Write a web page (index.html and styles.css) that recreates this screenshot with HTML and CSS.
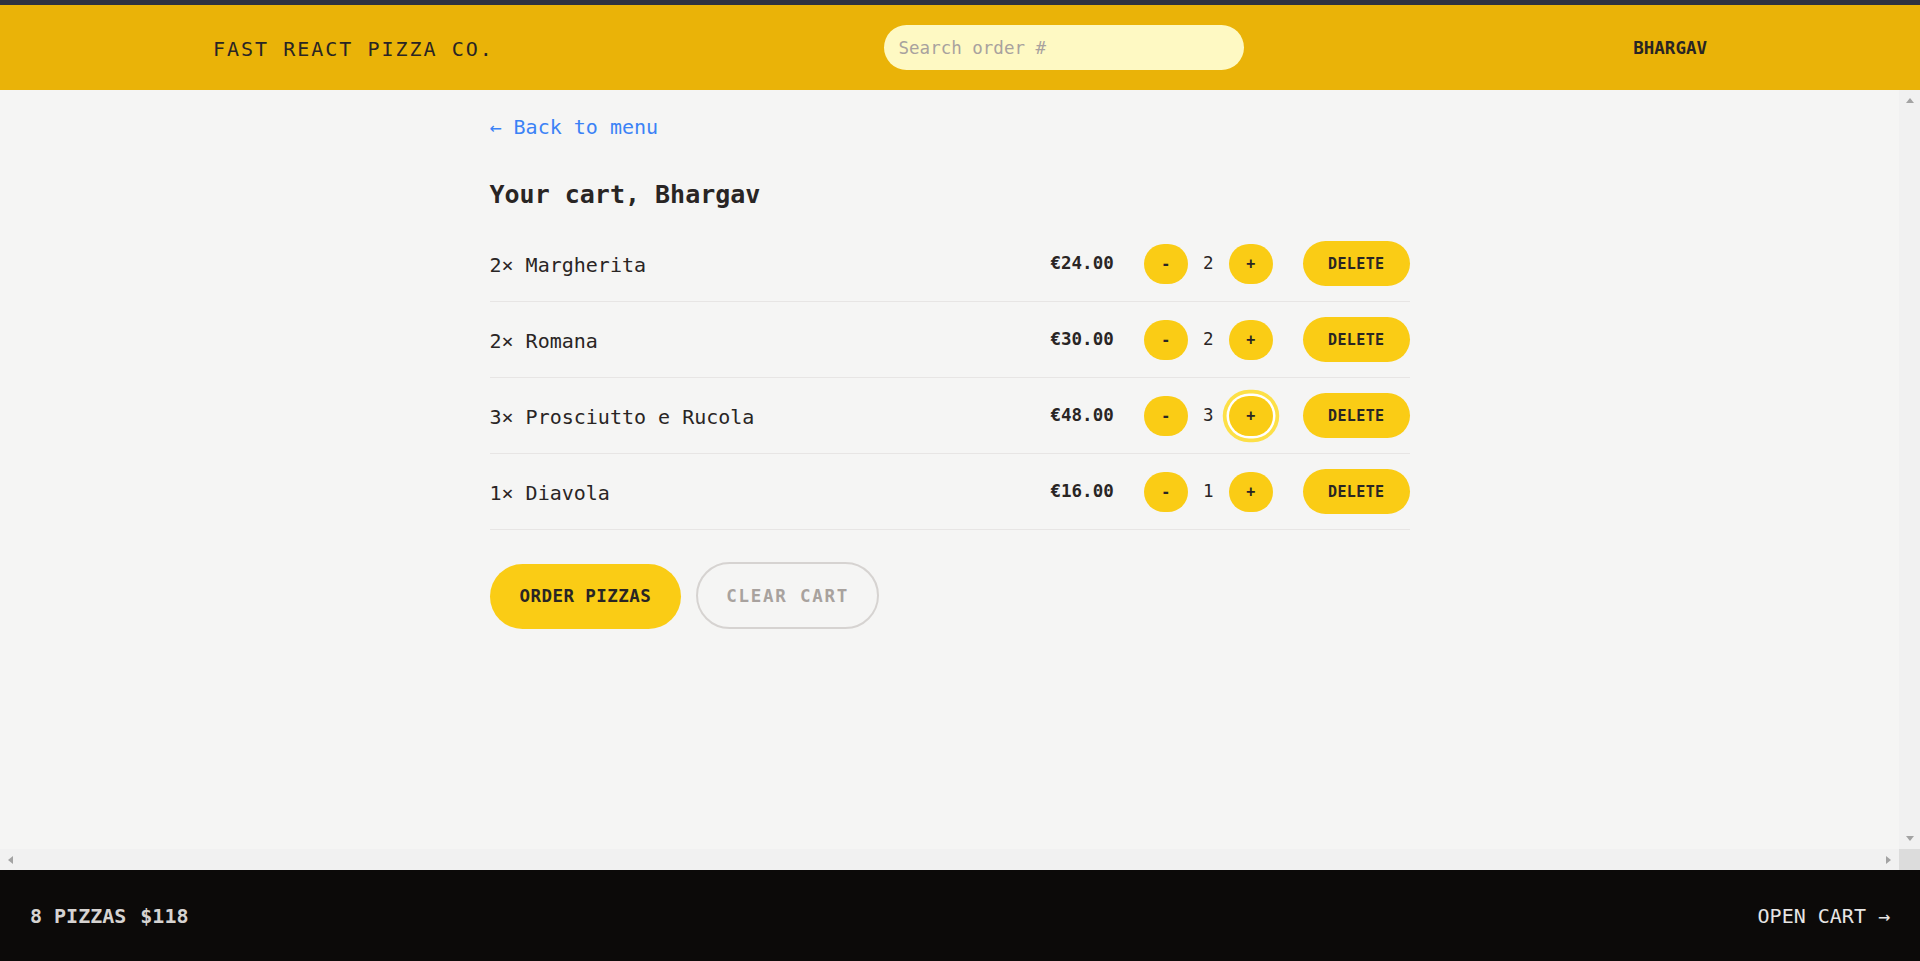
FILE: index.html
```html
<!DOCTYPE html>
<html lang="en">
<head>
<meta charset="utf-8">
<title>Fast React Pizza Co.</title>
<link rel="stylesheet" href="styles.css">
</head>
<body>
<div class="app">
  <div class="topstrip"></div>
  <header class="header">
    <a class="logo" href="#">Fast React Pizza Co.</a>
    <form class="search-form"><input class="search" type="text" placeholder="Search order #"></form>
    <div class="username">Bhargav</div>
  </header>
  <div class="viewport">
    <main class="main">
      <div class="cart">
        <a class="back" href="#">&larr; Back to menu</a>
        <h2 class="cart-title">Your cart, Bhargav</h2>
        <ul class="cart-list">
          <li class="cart-item">
            <p class="item-name">2&times; Margherita</p>
            <div class="item-actions">
              <p class="price">€24.00</p>
              <div class="qty">
                <button class="btn btn-round">-</button>
                <span class="qty-num">2</span>
                <button class="btn btn-round">+</button>
              </div>
              <button class="btn btn-small">Delete</button>
            </div>
          </li>
          <li class="cart-item">
            <p class="item-name">2&times; Romana</p>
            <div class="item-actions">
              <p class="price">€30.00</p>
              <div class="qty">
                <button class="btn btn-round">-</button>
                <span class="qty-num">2</span>
                <button class="btn btn-round">+</button>
              </div>
              <button class="btn btn-small">Delete</button>
            </div>
          </li>
          <li class="cart-item">
            <p class="item-name">3&times; Prosciutto e Rucola</p>
            <div class="item-actions">
              <p class="price">€48.00</p>
              <div class="qty">
                <button class="btn btn-round">-</button>
                <span class="qty-num">3</span>
                <button class="btn btn-round is-focused">+</button>
              </div>
              <button class="btn btn-small">Delete</button>
            </div>
          </li>
          <li class="cart-item">
            <p class="item-name">1&times; Diavola</p>
            <div class="item-actions">
              <p class="price">€16.00</p>
              <div class="qty">
                <button class="btn btn-round">-</button>
                <span class="qty-num">1</span>
                <button class="btn btn-round">+</button>
              </div>
              <button class="btn btn-small">Delete</button>
            </div>
          </li>
        </ul>
        <div class="cart-actions">
          <a class="btn btn-primary" href="#">Order pizzas</a>
          <button class="btn-secondary">Clear cart</button>
        </div>
      </div>
    </main>
    <div class="vbar">
      <span class="sb-btn"><span class="tri tri-up"></span></span>
      <span class="sb-btn"><span class="tri tri-down"></span></span>
    </div>
    <div class="hbar">
      <span class="sb-btn"><span class="tri tri-left"></span></span>
      <span class="sb-btn"><span class="tri tri-right"></span></span>
    </div>
    <div class="corner"></div>
  </div>
  <footer class="footer">
    <div class="footer-summary"><span>8 pizzas</span><span>$118</span></div>
    <a class="footer-link" href="#">Open cart &rarr;</a>
  </footer>
</div>
</body>
</html>
```

FILE: styles.css
```css
* {
  box-sizing: border-box;
  margin: 0;
  padding: 0;
}

html,
body {
  height: 100%;
}

body {
  font-family: "DejaVu Sans Mono", "Liberation Mono", monospace;
  color: #292524;
  background: #f5f5f4;
  overflow: hidden;
}

.app {
  display: grid;
  grid-template-rows: 5px 85px 1fr 91px;
  height: 100vh;
}

.topstrip {
  background: #2f3241;
}

/* Header */
.header {
  display: flex;
  align-items: center;
  justify-content: space-between;
  background: #eab308;
  padding: 0 213px;
  text-transform: uppercase;
}

.logo {
  font-size: 20px;
  line-height: 30px;
  letter-spacing: 2px;
  color: #292524;
  text-decoration: none;
  padding-top: 2px;
}

.search {
  display: block;
  width: 360px;
  height: 45px;
  border: none;
  border-radius: 9999px;
  background: #fef9c3;
  padding: 0 15px;
  font-family: inherit;
  font-size: 17.5px;
  color: #292524;
  outline: none;
}

.search::placeholder {
  color: #a8a29e;
}

.username {
  font-size: 17.5px;
  line-height: 25px;
  font-weight: 700;
  color: #292524;
  padding-top: 2px;
}

/* Scroll viewport with classic scrollbars */
.viewport {
  display: grid;
  grid-template-columns: 1fr 21px;
  grid-template-rows: 1fr 21px;
  min-height: 0;
  background: #f5f5f4;
}

.main {
  overflow: hidden;
  min-height: 0;
}

.vbar,
.hbar {
  display: flex;
  justify-content: space-between;
  background: #f1f1f1;
}

.vbar {
  flex-direction: column;
}

.corner {
  background: #dcdcdc;
}

.sb-btn {
  display: flex;
  align-items: center;
  justify-content: center;
  width: 21px;
  height: 21px;
}

.tri {
  width: 0;
  height: 0;
  border-style: solid;
  border-color: transparent;
}

.tri-up {
  border-width: 0 4.5px 5px;
  border-bottom-color: #a3a3a3;
}

.tri-down {
  border-width: 5px 4.5px 0;
  border-top-color: #a3a3a3;
}

.tri-left {
  border-width: 4.5px 5px 4.5px 0;
  border-right-color: #a3a3a3;
}

.tri-right {
  border-width: 4.5px 0 4.5px 5px;
  border-left-color: #a3a3a3;
}

.cart {
  max-width: 960px;
  margin: 0 auto;
  padding: 22px 20px 15px;
}

.back {
  display: block;
  width: max-content;
  font-size: 20px;
  line-height: 30px;
  color: #3b82f6;
  text-decoration: none;
}

.cart-title {
  margin-top: 35px;
  font-size: 25px;
  line-height: 35px;
  font-weight: 700;
}

.cart-list {
  list-style: none;
  margin-top: 14px;
  border-bottom: 1px solid #e7e5e4;
}

.cart-item {
  display: flex;
  align-items: center;
  justify-content: space-between;
  padding: 15px 0;
}

.cart-item + .cart-item {
  border-top: 1px solid #e7e5e4;
}

.item-name {
  font-size: 20px;
  line-height: 30px;
  padding-top: 2px;
}

.item-actions {
  display: flex;
  align-items: center;
  gap: 30px;
}

.price {
  font-size: 17.5px;
  line-height: 25px;
  font-weight: 700;
}

.qty {
  display: flex;
  align-items: center;
  gap: 15px;
}

.qty-num {
  font-size: 17.5px;
  line-height: 25px;
}

/* Buttons */
.btn {
  display: inline-block;
  font-family: inherit;
  border: none;
  border-radius: 9999px;
  background: #facc15;
  color: #292524;
  font-weight: 700;
  text-transform: uppercase;
  letter-spacing: 0.025em;
  text-decoration: none;
  cursor: pointer;
}

.btn-round {
  font-size: 15px;
  line-height: 20px;
  padding: 10px 17.5px;
}

.btn-round.is-focused {
  box-shadow: 0 0 0 2.5px #ffffff, 0 0 0 6.25px #fde047;
}

.btn-small {
  font-size: 15px;
  line-height: 20px;
  padding: 12.5px 25px;
}

.cart-actions {
  display: flex;
  align-items: baseline;
  gap: 15px;
  margin-top: 32px;
}

.btn-primary {
  font-size: 17.5px;
  line-height: 25px;
  padding: 20px 30px;
}

.btn-secondary {
  display: inline-block;
  font-family: inherit;
  background: transparent;
  border: 2.5px solid #d6d3d1;
  border-radius: 9999px;
  color: #a8a29e;
  font-size: 17.5px;
  line-height: 25px;
  font-weight: 700;
  text-transform: uppercase;
  letter-spacing: 0.1em;
  padding: 20px 28px 18px;
  cursor: pointer;
}

/* Footer */
.footer {
  display: flex;
  align-items: center;
  justify-content: space-between;
  background: #0c0a09;
  color: #e7e5e4;
  padding: 0 30px;
  font-size: 20px;
  line-height: 30px;
  text-transform: uppercase;
}

.footer-summary {
  display: flex;
  gap: 14px;
  font-weight: 700;
  color: #d6d3d1;
}

.footer-link {
  color: #e7e5e4;
  text-decoration: none;
}
```
